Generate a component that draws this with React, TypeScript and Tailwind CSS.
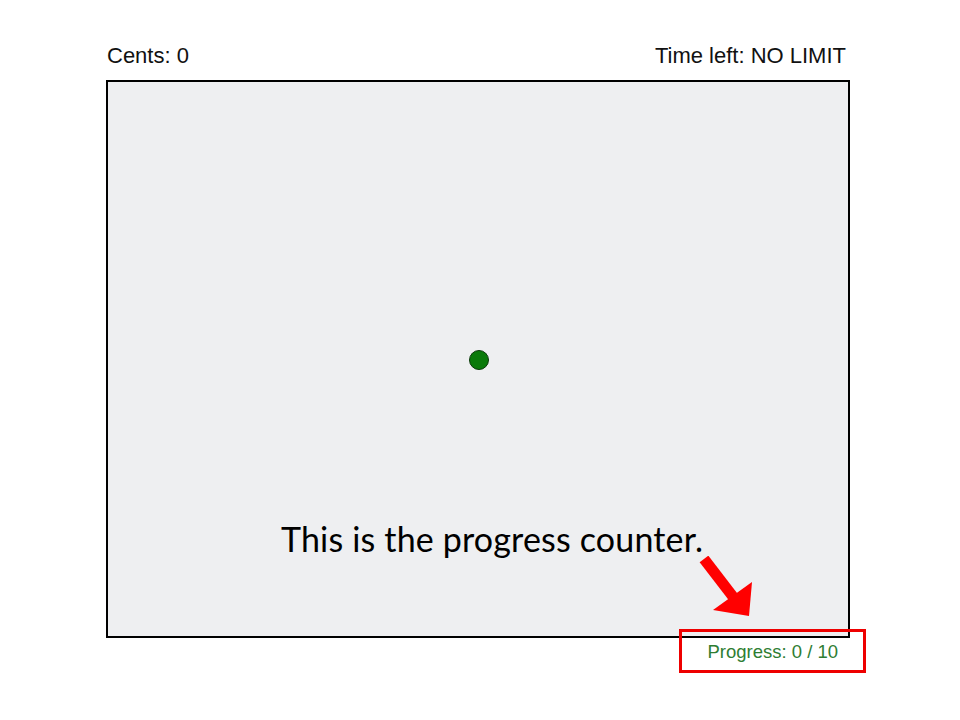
const Arrow = () => (
  <svg width="60" height="64" viewBox="0 0 60 64" className="absolute left-[698px] top-[556px]">
    <line x1="6" y1="3" x2="36" y2="42" stroke="#ff0000" strokeWidth="11" />
    <polygon points="15,54 51,60 54,26" fill="#ff0000" />
  </svg>
);

export default function App() {
  return (
    <div className="relative h-[720px] w-[960px] bg-white font-['Liberation_Sans',Arial,sans-serif] text-[#111]">
      <div className="pl-[106px] pt-[43px]">
        <div className="flex w-[744px] items-end justify-between pr-[4px] pl-[1px] text-[22px] leading-[25px]">
          <span>Cents: 0</span>
          <span>Time left: NO LIMIT</span>
        </div>
        <div className="relative mt-[12px] h-[558px] w-[744px] border-2 border-black bg-[#eeeff1]">
          <div className="absolute left-[361px] top-[268px] h-[20px] w-[20px] rounded-full border border-[#0a3a0a] bg-[#0a7a0a]" />
        </div>
        <div className="flex w-[744px] justify-end pr-[12px] pt-[3px] text-[18.5px] leading-[22px] text-[#2e7d32]">
          Progress: 0 / 10
        </div>
      </div>

      <div className="absolute left-[281px] top-[517px] font-['Lato','Noto_Sans',sans-serif] text-[34px] leading-[44px] tracking-[0.17px] text-black">
        This is the progress counter.
      </div>
      <Arrow />
      <div className="absolute left-[679px] top-[629px] h-[44px] w-[187px] border-[3px] border-[#ee0000]" />
    </div>
  );
}
